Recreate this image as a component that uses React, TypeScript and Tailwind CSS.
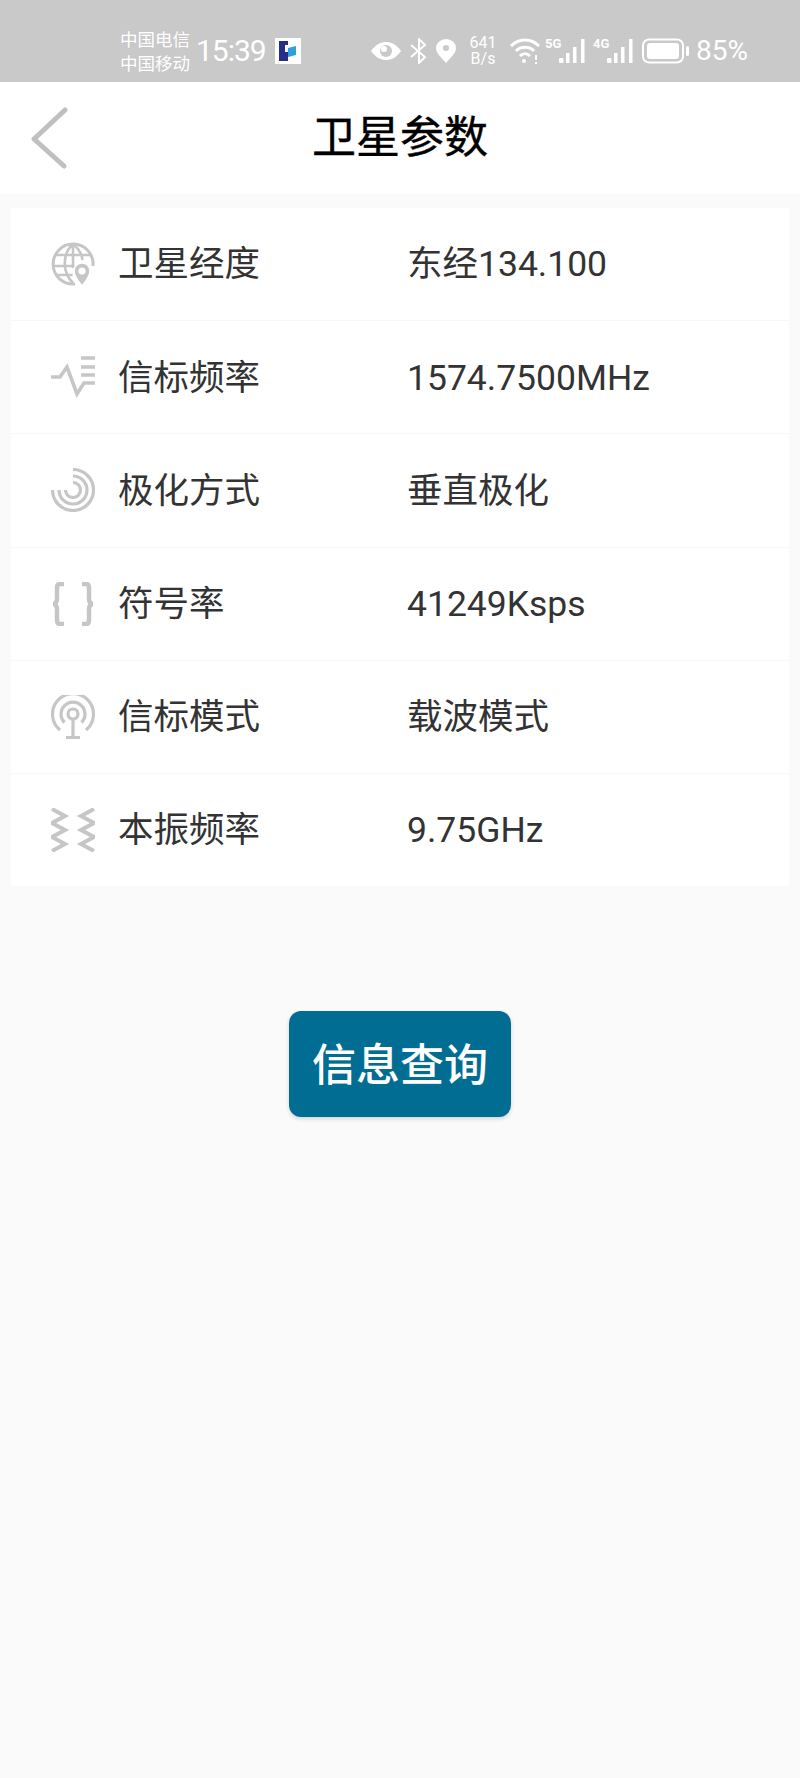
const fontStack = "font-['Roboto','Noto_Sans_CJK_SC','Noto_Sans',sans-serif]";

type Param = { label: string; value: string; icon: React.ReactNode };

const iconProps = {
  width: 44,
  height: 44,
  viewBox: "0 0 44 44",
  fill: "none",
  stroke: "#c6c6c6",
  strokeWidth: 3,
};

function GlobeIcon() {
  return (
    <svg {...iconProps}>
      <path d="M24 42A20 20 0 1 1 42 24" strokeWidth="3" />
      <path d="M22 2c-11 10-11 28 0 39M22 2c6 5 9 11 9.500 16M22 2v24M4 13h36M2.500 24h21M4.500 33h17" strokeWidth="2.600" />
      <path d="M31 44c-5-6-8-10-8-15a8 8 0 0 1 16 0c0 5-3 9-8 15z" fill="#c6c6c6" stroke="#ffffff" strokeWidth="1.500" />
      <circle cx="31" cy="29" r="3.600" fill="#ffffff" stroke="none" />
    </svg>
  );
}

function PulseIcon() {
  return (
    <svg {...iconProps} strokeWidth="3.600">
      <path d="M0 22h9l7-10 10 27 7-11h11" />
      <path d="M30 3h14M30 12h14M30 20h14" />
    </svg>
  );
}

function SpiralIcon() {
  return (
    <svg {...iconProps} strokeWidth="3.200">
      <path d="M22 1.500A20.500 20.500 0 1 1 1.500 22" />
      <path d="M22 8A14 14 0 1 1 8 22" />
      <path d="M22 14.500A7.500 7.500 0 1 1 14.500 22" />
    </svg>
  );
}

function BracesIcon() {
  return (
    <svg {...iconProps} strokeWidth="4.500">
      <path d="M13 2H9C6.500 2 6 4 6 6v11c0 3-1.500 5-4 5 2.500 0 4 2 4 5v11c0 2 .5 4 3 4h4" />
      <path d="M31 2h4c2.500 0 3 2 3 4v11c0 3 1.500 5 4 5-2.500 0-4 2-4 5v11c0 2-.5 4-3 4h-4" />
    </svg>
  );
}

function BeaconIcon() {
  return (
    <svg {...iconProps} strokeWidth="3.200">
      <path d="M9 35a20.500 20.500 0 1 1 26 0" />
      <path d="M13.500 27.500a12 12 0 1 1 17 0" />
      <circle cx="22" cy="19" r="5" />
      <path d="M22 24v18M15 42.500h14" />
    </svg>
  );
}

function ZigzagIcon() {
  return (
    <svg {...iconProps} strokeWidth="4">
      <path d="M1 1l13 7-13 7 13 7-13 7 13 7-13 7" />
      <path d="M43 1L30 8l13 7-13 7 13 7-13 7 13 7" />
    </svg>
  );
}

const params: Param[] = [
  { label: "卫星经度", value: "东经134.100", icon: <GlobeIcon /> },
  { label: "信标频率", value: "1574.7500MHz", icon: <PulseIcon /> },
  { label: "极化方式", value: "垂直极化", icon: <SpiralIcon /> },
  { label: "符号率", value: "41249Ksps", icon: <BracesIcon /> },
  { label: "信标模式", value: "载波模式", icon: <BeaconIcon /> },
  { label: "本振频率", value: "9.75GHz", icon: <ZigzagIcon /> },
];

function Signal({ tag }: { tag: string }) {
  return (
    <div className="relative h-[26px] w-[41px]">
      <span className="absolute left-0 top-[-1px] font-['Roboto',sans-serif] text-[13px] font-bold leading-none text-white">
        {tag}
      </span>
      <svg width="41" height="26" viewBox="0 0 41 26" fill="#ffffff">
        <rect x="14" y="20" width="4.500" height="5" rx="1" />
        <rect x="21" y="15" width="3.500" height="10" />
        <rect x="28" y="9" width="3.500" height="16" />
        <rect x="36" y="1" width="3.500" height="24" />
      </svg>
    </div>
  );
}

function StatusBar() {
  return (
    <div className="flex h-[82px] items-center bg-[#c9c9c9] pl-[120px] pt-[20px] text-white">
      <div className="w-[76px] font-['Noto_Sans_CJK_SC',sans-serif] text-[17.500px] leading-[24px]">
        <div>中国电信</div>
        <div>中国移动</div>
      </div>
      <span className="w-[79px] font-['Roboto',sans-serif] text-[30px] leading-none tracking-[-1px]">15:39</span>
      <div className="flex h-[26px] w-[26px] items-center justify-center bg-white">
        <svg width="18" height="20" viewBox="0 0 18 20">
          <path d="M0 0h9v4H6v7h3v9H0z" fill="#262e8a" />
          <path d="M9 7l8-2v9l-8 2z" fill="#2f9fe0" />
        </svg>
      </div>
      <svg className="ml-[70px]" width="30" height="20" viewBox="0 0 30 20">
        <path d="M0 10C5 3 10 1 15 1s10 2 15 9c-5 7-10 9-15 9S5 17 0 10z" fill="#ffffff" />
        <circle cx="15" cy="10" r="6" fill="#c9c9c9" />
        <circle cx="13" cy="8" r="3" fill="#ffffff" />
      </svg>
      <svg className="ml-[9px]" width="17" height="26" viewBox="0 0 17 26" fill="none" stroke="#ffffff" strokeWidth="2">
        <path d="M1 7l14 12-6 6V1l6 6L1 19" />
      </svg>
      <svg className="ml-[9px]" width="20" height="24" viewBox="0 0 20 24">
        <path d="M10 24C4 17 0 14 0 9a10 9 0 0 1 20 0c0 5-4 8-10 15z" fill="#ffffff" />
        <circle cx="10" cy="9" r="3" fill="#c9c9c9" />
      </svg>
      <div className="ml-[12px] w-[30px] text-center font-['Roboto',sans-serif] text-[16px] leading-[16px]">
        <div>641</div>
        <div>B/s</div>
      </div>
      <svg className="ml-[12px]" width="30" height="26" viewBox="0 0 30 26" fill="none" stroke="#ffffff" strokeWidth="3">
        <path d="M1 8c8-8 20-8 28 0M6 13c5-5 13-5 18 0M10 18c3-3 7-3 10 0" />
        <circle cx="14" cy="23" r="2" fill="#ffffff" stroke="none" />
        <path d="M26 17v5M26 24v2" strokeWidth="2" />
      </svg>
      <div className="ml-[5px]">
        <Signal tag="5G" />
      </div>
      <div className="ml-[7px]">
        <Signal tag="4G" />
      </div>
      <svg className="ml-[8px]" width="47" height="26" viewBox="0 0 47 26" fill="none">
        <rect x="1" y="1.500" width="40" height="23" rx="6" stroke="#ffffff" strokeWidth="2" />
        <rect x="5" y="5" width="32" height="16" rx="3" fill="#ffffff" />
        <rect x="44" y="8" width="3" height="10" rx="1.500" fill="#ffffff" />
      </svg>
      <span className="ml-[7px] font-['Roboto',sans-serif] text-[28px] leading-none">85%</span>
    </div>
  );
}

export default function App() {
  return (
    <div className={`flex min-h-[1778px] flex-col bg-[#fafafa] ${fontStack}`}>
      <StatusBar />

      <header className="relative flex h-[112px] items-center justify-center bg-white">
        <svg className="absolute left-[30px] top-[25px]" width="38" height="62" viewBox="0 0 38 62" fill="none" stroke="#c0c0c0" strokeWidth="5" strokeLinecap="round" strokeLinejoin="round">
          <path d="M35 3L4 32l30 27" />
        </svg>
        <h1 className="text-[44px] font-normal leading-none text-black [-webkit-text-stroke:0.4px_black]">卫星参数</h1>
      </header>

      <section className="mx-[11px] mt-[14px] flex h-[678px] flex-col gap-px bg-[#f8f8f8]">
        {params.map((item) => (
          <div key={item.label} className="flex flex-1 items-center bg-white pl-[40px]">
            <div className="flex h-[44px] w-[44px] items-center justify-center">{item.icon}</div>
            <span className="ml-[23px] w-[289px] pt-[2px] text-[35.500px] leading-none text-[#333333]">{item.label}</span>
            <span className="pt-[2px] text-[35.500px] leading-none text-[#333333]">{item.value}</span>
          </div>
        ))}
      </section>

      <button
        type="button"
        className="mx-auto mt-[125px] flex h-[106px] w-[222px] items-center justify-center rounded-[12px] bg-[#016d92] pt-[4px] text-[44px] font-medium leading-none text-white shadow-[0_2px_4px_rgba(0,0,0,0.15)]"
      >
        信息查询
      </button>
    </div>
  );
}
